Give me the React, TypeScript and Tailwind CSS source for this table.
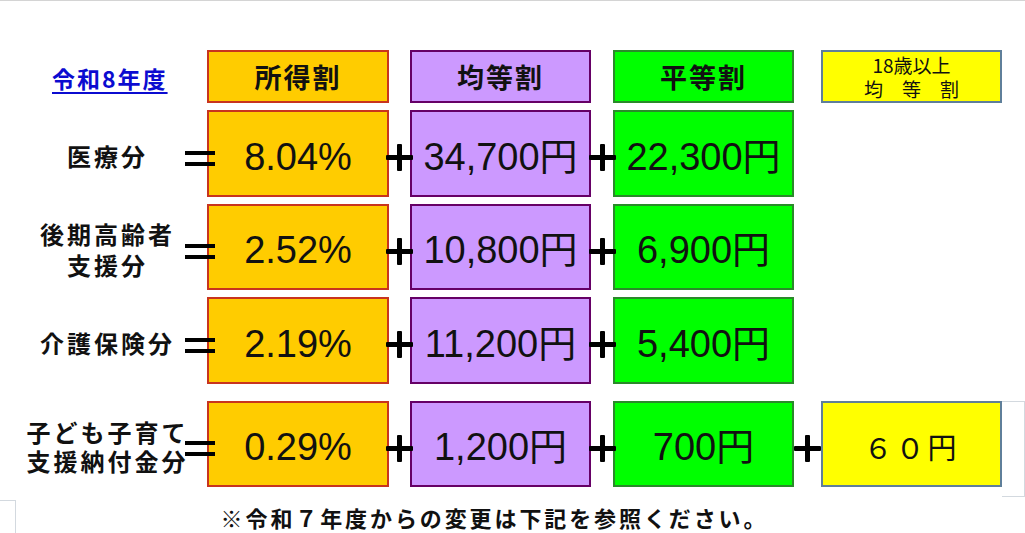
const jp = "font-['Noto_Sans_CJK_JP',sans-serif]";
const num = "font-['Liberation_Sans','Noto_Sans_CJK_JP',sans-serif]";

const boxStyles = {
  orange: "bg-[#ffcc00] border-[#c8341e]",
  purple: "bg-[#cc99ff] border-[#660066]",
  green: "bg-[#00ff00] border-[#2a8a2a]",
  yellow: "bg-[#ffff00] border-[#5f7f9a]",
};

type Tone = keyof typeof boxStyles;

function Box({ tone, width, children }: { tone: Tone; width: string; children?: React.ReactNode }) {
  return (
    <div className={`${width} h-full shrink-0 border-2 flex items-center justify-center ${boxStyles[tone]}`}>
      {children}
    </div>
  );
}

function Plus({ width }: { width: string }) {
  return (
    <div className={`${width} h-full shrink-0 flex items-center justify-center relative z-10`}>
      <svg viewBox="0 0 27 27" className="w-[27px] h-[27px] shrink-0 mt-[8px]">
        <rect x="0" y="11" width="27" height="5" rx="1" fill="#000" />
        <rect x="11" y="0" width="5" height="27" rx="1" fill="#000" />
      </svg>
    </div>
  );
}

function Equals() {
  return (
    <div className="w-[30px] h-full shrink-0 -mr-[8px] flex items-center justify-center relative z-10">
      <svg viewBox="0 0 30 15" className="w-[30px] h-[15px] shrink-0 mt-[9px]">
        <rect x="0" y="0" width="30" height="4" fill="#000" />
        <rect x="0" y="11" width="30" height="4" fill="#000" />
      </svg>
    </div>
  );
}

function Value({ children }: { children: React.ReactNode }) {
  return (
    <span className={`${num} text-[38px] leading-none text-[#111] whitespace-nowrap pt-[6px]`}>
      {children}
    </span>
  );
}

interface RowData {
  label: string[];
  rate: string;
  perCapita: string;
  perHousehold: string;
  extra?: string;
  height: string;
  gap: string;
  leading: string;
}

const rows: RowData[] = [
  { label: ["医療分"], rate: "8.04%", perCapita: "34,700円", perHousehold: "22,300円", height: "h-[87px]", gap: "mt-[7px]", leading: "leading-[30px]" },
  { label: ["後期高齢者", "支援分"], rate: "2.52%", perCapita: "10,800円", perHousehold: "6,900円", height: "h-[86px]", gap: "mt-[7px]", leading: "leading-[31px]" },
  { label: ["介護保険分"], rate: "2.19%", perCapita: "11,200円", perHousehold: "5,400円", height: "h-[87px]", gap: "mt-[7px]", leading: "leading-[30px]" },
  { label: ["子ども子育て", "支援納付金分"], rate: "0.29%", perCapita: "1,200円", perHousehold: "700円", extra: "６０円", height: "h-[86px]", gap: "mt-[17px]", leading: "leading-[29px]" },
];

function HeaderText({ children }: { children: React.ReactNode }) {
  return <span className={`${jp} text-[27px] font-bold tracking-[2px] leading-none text-[#111]`}>{children}</span>;
}

export default function App() {
  return (
    <div className="w-[1025px] h-[533px] bg-white overflow-hidden border-t border-[#d4d4d4]">
      <div className="pt-[49px]">
        {/* header */}
        <div className="flex h-[53px]">
          <div className="w-[207px] shrink-0 flex items-center pl-[52px]">
            <span className={`${jp} text-[23px] leading-none font-bold underline underline-offset-[4px] text-[#0b0bd0] tracking-[2px] mt-[4px]`}>令和8年度</span>
          </div>
          <Box tone="orange" width="w-[182px]"><HeaderText>所得割</HeaderText></Box>
          <div className="w-[21px] shrink-0" />
          <Box tone="purple" width="w-[181px]"><HeaderText>均等割</HeaderText></Box>
          <div className="w-[22px] shrink-0" />
          <Box tone="green" width="w-[181px]"><HeaderText>平等割</HeaderText></Box>
          <div className="w-[27px] shrink-0" />
          <Box tone="yellow" width="w-[181px]">
            <p className={`${jp} text-[19px] leading-[24px] text-[#111] text-center`}>
              18歳以上
              <br />
              均　等　割
            </p>
          </Box>
        </div>

        {rows.map((r) => (
          <div key={r.rate} className={`flex ${r.height} ${r.gap}`}>
            <div className="w-[185px] shrink-0 pl-[30px] flex items-center justify-center pt-[4px]">
              <p className={`${jp} text-[24px] font-bold tracking-[3px] ${r.leading} text-[#111] whitespace-nowrap text-center`}>
                {r.label.map((line, i) => (
                  <span key={line}>
                    {i > 0 && <br />}
                    {line}
                  </span>
                ))}
              </p>
            </div>
            <Equals />
            <Box tone="orange" width="w-[182px]"><Value>{r.rate}</Value></Box>
            <Plus width="w-[21px]" />
            <Box tone="purple" width="w-[181px]"><Value>{r.perCapita}</Value></Box>
            <Plus width="w-[22px]" />
            <Box tone="green" width="w-[181px]"><Value>{r.perHousehold}</Value></Box>
            {r.extra && (
              <>
                <Plus width="w-[27px]" />
                <Box tone="yellow" width="w-[181px]">
                  <span className={`${jp} text-[29px] leading-none tracking-[3px] text-[#111] pt-[4px]`}>{r.extra}</span>
                </Box>
                <div className="w-[23px] h-[96px] shrink-0 border-t border-r border-b border-[#d3d9df]" />
              </>
            )}
          </div>
        ))}

        {/* footer */}
        <div className="flex mt-[19px] h-[30px]">
          <div className="w-[16px] shrink-0 border-t border-r border-[#d3d9df] -mt-[6px]" />
          <div className="flex-1 flex justify-center pr-[52px]">
            <span className={`${jp} text-[22px] font-bold tracking-[2.9px] leading-none text-[#111] whitespace-nowrap`}>
              ※令和７年度からの変更は下記を参照ください。
            </span>
          </div>
        </div>
      </div>
    </div>
  );
}
